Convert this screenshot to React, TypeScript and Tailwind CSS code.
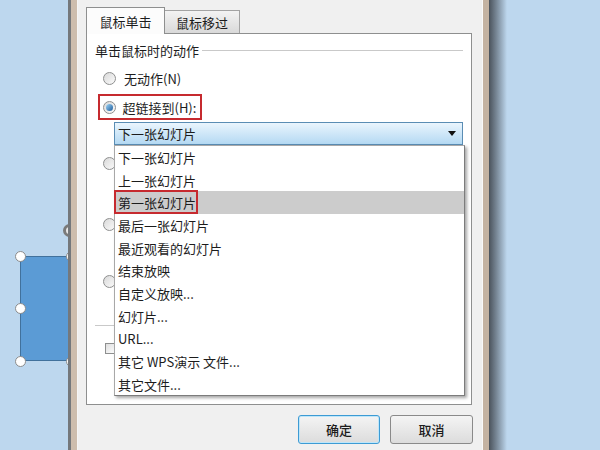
import React from 'react';

const items = [
  '下一张幻灯片',
  '上一张幻灯片',
  '第一张幻灯片',
  '最后一张幻灯片',
  '最近观看的幻灯片',
  '结束放映',
  '自定义放映...',
  '幻灯片...',
  'URL...',
  '其它 WPS演示 文件...',
  '其它文件...',
];

function Radio({ checked }: { checked?: boolean }) {
  return (
    <span className="flex h-[13px] w-[13px] shrink-0 items-center justify-center rounded-full border border-[#8e8f8f] bg-gradient-to-br from-[#d9d9d9] to-[#fbfbfb]">
      {checked && (
        <span className="h-[7px] w-[7px] rounded-full bg-gradient-to-br from-[#9fd6f7] to-[#1a5b9a]" />
      )}
    </span>
  );
}

function Handle({ className }: { className: string }) {
  return (
    <span
      className={`absolute h-[11px] w-[11px] rounded-full border border-[#8c8c8c] bg-white ${className}`}
    />
  );
}

function Slide() {
  // shape on the slide canvas, partly covered by the dialog
  return (
    <div className="absolute left-[20px] top-[256px] h-[105px] w-[52px] border border-[#41719c] bg-[#5b9bd5]">
      <span className="absolute left-[42px] top-[-33px] h-[13px] w-[13px] rounded-full border-[3px] border-[#7a7a7a] bg-[#e8e8e8]" />
      <Handle className="left-[-6px] top-[-6px]" />
      <Handle className="left-[-6px] top-[46px]" />
      <Handle className="left-[-6px] top-[99px]" />
      <Handle className="left-[45px] top-[-6px]" />
      <Handle className="left-[45px] top-[99px]" />
    </div>
  );
}

function Row({ children, className }: { children: React.ReactNode; className: string }) {
  return <div className={`flex h-[20px] items-center gap-[8px] pl-[16px] ${className}`}>{children}</div>;
}

export default function App() {
  return (
    <div className="relative flex h-[450px] w-[600px] overflow-hidden bg-[#bdd7ee] font-['Noto_Sans_CJK_SC','Noto_Sans',sans-serif] text-[13px] leading-none text-[#1c1c1c]">
      <Slide />
      <div className="w-[68px] shrink-0" />

      {/* dialog window */}
      <div className="relative z-10 flex h-full shrink-0">
        <div className="w-[3px] bg-[#74787c]" />
        <div className="w-[6px] bg-[#cdbdad]" />
        <div className="w-[1px] bg-[#f6f6f6]" />

        <div className="flex h-full w-[404px] flex-col bg-[#f0f0f0] pl-[8px] pr-[10px] pt-[7px]">
          <div className="flex h-[26px] items-end">
            <div className="relative z-10 -mb-px flex h-[27px] w-[79px] items-center justify-center border border-b-0 border-[#8e8f8f] bg-[#fcfcfc]">
              鼠标单击
            </div>
            <div className="flex h-[23px] w-[75px] items-center justify-center border border-b-0 border-l-0 border-[#a3a3a3] bg-gradient-to-b from-[#f3f3f3] to-[#d9d9d9]">
              鼠标移过
            </div>
          </div>

          <div className="relative h-[372px] border border-[#8e8f8f] bg-white">
            <div className="mt-[6px] flex h-[20px] items-center pl-[8px] pr-[8px]">
              <span>单击鼠标时的动作</span>
              <span className="ml-[3px] h-px flex-1 bg-[#c9c9c9]" />
            </div>

            <Row className="mt-[8px]">
              <Radio />
              <span>无动作(N)</span>
            </Row>

            <div className="ml-[11px] mt-[6px] flex h-[26px] w-[104px] items-center gap-[7px] border-[2.5px] border-[#c62a2f] pl-[2.5px]">
              <Radio checked />
              <span className="whitespace-nowrap">超链接到(H):</span>
            </div>

            <div className="ml-[27px] mt-[2px] flex h-[23px] w-[349px] items-center justify-between border border-[#5a8db4] bg-gradient-to-b from-[#eaf5fd] to-[#b4d9f3] pl-[3px] pr-[6px]">
              <span>下一张幻灯片</span>
              <span className="h-0 w-0 border-x-[4px] border-t-[5px] border-x-transparent border-t-[#111]" />
            </div>

            {/* controls hidden behind the open list */}
            <Row className="mt-[8px]">
              <Radio />
            </Row>
            <Row className="mt-[41px]">
              <Radio />
            </Row>
            <Row className="mt-[37px]">
              <Radio />
            </Row>
            <div className="mx-[8px] mt-[34px] h-px bg-[#c9c9c9]" />
            <div className="mt-[12px] flex h-[20px] items-center pl-[18px]">
              <span className="h-[11px] w-[11px] border border-[#8e8f8f] bg-gradient-to-br from-[#dedede] to-white" />
            </div>

            {/* open dropdown list */}
            <div className="absolute left-[27px] top-[111px] h-[251px] w-[351px] border border-[#a8a8a8] border-r-[#7c7c7c] border-b-[#7c7c7c] bg-white shadow-[2px_2px_3px_rgba(0,0,0,0.35)]">
              {items.map((item, i) => (
                <div
                  key={item}
                  className={`relative flex h-[22.7px] items-center pl-[3px] ${i === 2 ? 'bg-[#cccccc]' : ''}`}
                >
                  <span className="whitespace-nowrap">{item}</span>
                  {i === 2 && (
                    <span className="absolute left-[-1px] top-[-1px] h-[24px] w-[84px] border-[2.5px] border-[#c62a2f]" />
                  )}
                </div>
              ))}
            </div>
          </div>

          <div className="-mr-px mt-[10px] flex justify-end gap-[10px]">
            <button className="flex h-[29px] w-[82px] items-center justify-center rounded-[3px] border border-[#3d9bd4] bg-gradient-to-b from-[#f4f4f4] to-[#dcdcdc] font-medium shadow-[inset_0_0_0_1px_#bfe6f9]">
              确定
            </button>
            <button className="flex h-[29px] w-[83px] items-center justify-center rounded-[3px] border border-[#8a8a8a] bg-gradient-to-b from-[#f4f4f4] to-[#dcdcdc] font-medium">
              取消
            </button>
          </div>
        </div>

        <div className="w-[1px] bg-[#fafafa]" />
        <div className="w-[6px] bg-[#c4b3a2]" />
        <div className="w-[18px] bg-gradient-to-r from-[#4b535c] to-[#bdd7ee]" />
      </div>
    </div>
  );
}
